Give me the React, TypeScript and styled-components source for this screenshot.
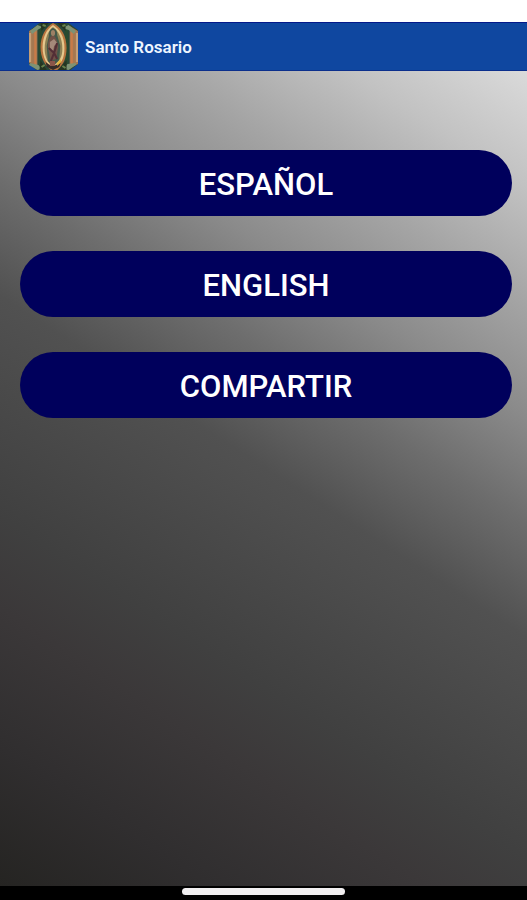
import React from "react";
import styled, { createGlobalStyle } from "styled-components";

const GlobalStyle = createGlobalStyle`
  *, *::before, *::after { box-sizing: border-box; }
  body { margin: 0; background: #000; font-family: Roboto, "Liberation Sans", sans-serif; }
`;

const Screen = styled.div`
  min-height: 100vh;
  display: flex;
  flex-direction: column;
`;

const StatusBar = styled.div`
  height: 22px;
  background: #fff;
`;

const AppBar = styled.header`
  display: flex;
  align-items: center;
  gap: 7px;
  height: 49px;
  padding-left: 28px;
  background: #0f47a0;
  border-top: 1px solid #04198a;
  border-bottom: 1px solid #0b2f8c;
`;

const Title = styled.h1`
  margin: 0;
  color: #eef6ff;
  font-size: 17px;
  font-weight: 600;
  line-height: 24px;
`;

const Emblem = styled.svg`
  display: block;
  width: 50px;
  height: 48px;
  flex: none;
`;

const Content = styled.main`
  flex: 1;
  display: flex;
  flex-direction: column;
  gap: 35px;
  padding: 79px 15px 32px 20px;
  background: linear-gradient(
    213deg,
    #dadada 0%,
    #c2c2c2 10%,
    #a5a5a5 20%,
    #8a8a8a 30%,
    #6d6d6d 39%,
    #515151 49%,
    #484848 59%,
    #404040 68%,
    #3b3839 76%,
    #302e2f 88%,
    #252422 100%
  );
`;

const MenuButton = styled.button`
  height: 66px;
  border: 0;
  border-radius: 33px;
  padding: 4px 0 0;
  background: #00005c;
  color: #fff;
  font-family: inherit;
  font-size: 31px;
  font-weight: 500;
  line-height: 40px;
  text-transform: uppercase;
  cursor: pointer;
`;

const NavBar = styled.footer`
  display: flex;
  justify-content: center;
  height: 14px;
  padding-top: 2px;
  background: #000;
`;

const HomeHandle = styled.div`
  width: 31%;
  height: 7px;
  border-radius: 4px;
  background: #f1eff0;
`;

const GuadalupeEmblem = () => (
  <Emblem viewBox="1 0 48 48" preserveAspectRatio="none" role="img" aria-label="Virgen de Guadalupe">
    <path d="M12 0h28l9 7v34l-7 6H9l-7-6V8z" fill="#28483a" />
    <path d="M10 3 2 8v32l8 5zM41 3l8 5v33l-8 4z" fill="#a57851" />
    <path d="M3 10v29M48 10v29" stroke="#c5a078" strokeWidth="2" />
    <path d="M8 6v36M43 6v36" stroke="#c97b48" strokeWidth="2" />
    <path d="M13 5v38M38 5v38" stroke="#294b2f" strokeWidth="3" />
    <path d="m3 8 7-6 5 2-5 3-5 4zM47 8l-7-6-6 3 6 2 5 4zM3 40l8 2 3 4-4 1-8-5zM47 40l-8 1-4 5 5 1 7-5z" fill="#7d9274" />
    <path d="M25 0C18 4 13 13 13 24c0 11 4 18 10 23h6c6-5 9-12 9-22C38 13 33 4 25 0z" fill="#b8743f" />
    <path d="M25 2c-6 4-10 12-10 22 0 11 4 17 9 21 9-2 12-10 12-20 0-12-5-19-11-23z" fill="#e5c88d" />
    <path d="M25 4c-5 4-8 12-8 22 0 8 3 14 8 17 6-4 9-9 9-17 0-11-4-18-9-22z" fill="#8e8054" />
    <path d="M25 5c-3 1-4 4-4 8l-2 10 1 15 5 5 6-6 1-14-3-11c0-4-1-6-4-7z" fill="#43594a" />
    <path d="M25 12c-3 1-5 6-5 12l3 14 5-2 2-12c-1-6-2-10-5-12z" fill="#715247" />
    <ellipse cx="25" cy="10" rx="2" ry="3" fill="#9d8065" />
    <path d="m22 19 4-3 3 4-3 3-1 7-3-5z" fill="#a5897a" />
    <path d="m21 25 5 5-3 8M29 20l-3 10 3 6" fill="none" stroke="#532e36" strokeWidth="2" />
    <path d="M18 39c5 5 10 5 15-1l-2 6-6 3-6-3z" fill="#352c28" />
    <path d="M22 38h5v5h-5z" fill="#8b5649" />
    <path d="m29 40 3-4 1 3-4 4z" fill="#e4b53a" />
    <path d="M13 0h8l-7 8zM29 0h8v8zM13 37l6 10h-7zM38 37v10h-8z" fill="#253521" />
    <path d="m15 2 3 1M34 3l3-1M14 44l3-2M34 43l3 2" stroke="#68824c" strokeWidth="2" />
  </Emblem>
);

const options = ["Español", "English", "Compartir"];

export default function App() {
  return (
    <>
      <GlobalStyle />
      <Screen>
        <StatusBar />
        <AppBar>
          <GuadalupeEmblem />
          <Title>Santo Rosario</Title>
        </AppBar>
        <Content>
          {options.map((label) => (
            <MenuButton key={label} type="button">{label}</MenuButton>
          ))}
        </Content>
        <NavBar>
          <HomeHandle />
        </NavBar>
      </Screen>
    </>
  );
}
